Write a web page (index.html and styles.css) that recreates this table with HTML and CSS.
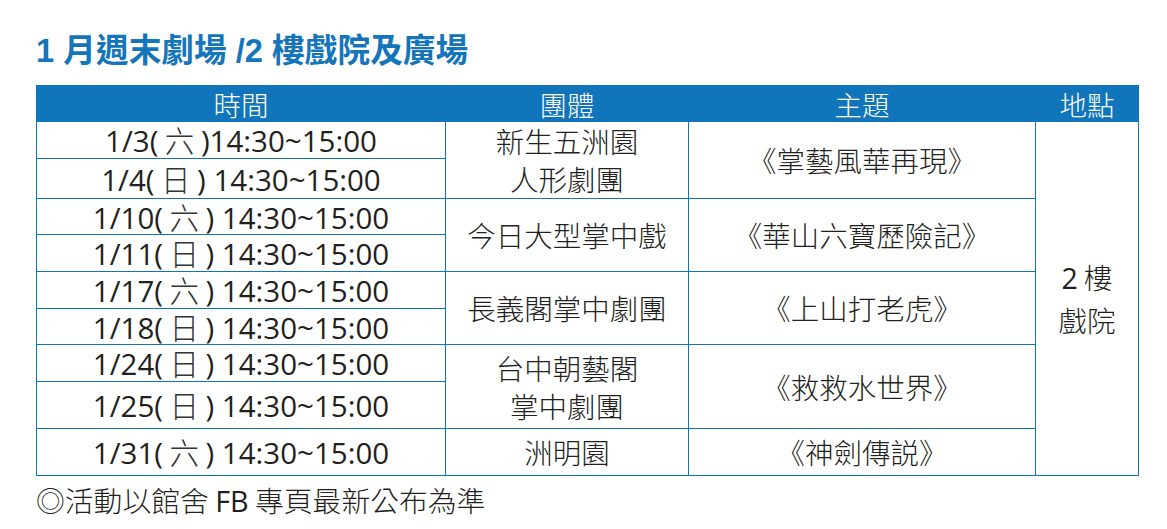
FILE: index.html
```html
<!DOCTYPE html>
<html lang="zh-Hant">
<head>
<meta charset="utf-8">
<title>1 月週末劇場</title>
<link rel="stylesheet" href="styles.css">
</head>
<body>
<div class="page">
  <h1 class="title">1 月週末劇場 /2 樓戲院及廣場</h1>
  <table class="sched">
    <colgroup>
      <col class="c-time">
      <col class="c-group">
      <col class="c-theme">
      <col class="c-place">
    </colgroup>
    <thead>
      <tr class="head">
        <th>時間</th>
        <th>團體</th>
        <th>主題</th>
        <th>地點</th>
      </tr>
    </thead>
    <tbody>
      <tr class="r1">
        <td class="time">1/3(<span class="cj"> 六 </span>)14:30~15:00</td>
        <td class="cjk two" rowspan="2">新生五洲園<br>人形劇團</td>
        <td class="cjk theme" rowspan="2">《掌藝風華再現》</td>
        <td class="cjk place" rowspan="9"><span class="lat">2</span> 樓<br>戲院</td>
      </tr>
      <tr class="r2">
        <td class="time">1/4(<span class="cj"> 日 </span>) 14:30~15:00</td>
      </tr>
      <tr class="r3">
        <td class="time">1/10(<span class="cj"> 六 </span>) 14:30~15:00</td>
        <td class="cjk" rowspan="2">今日大型掌中戲</td>
        <td class="cjk theme" rowspan="2">《華山六寶歷險記》</td>
      </tr>
      <tr class="r4">
        <td class="time">1/11(<span class="cj"> 日 </span>) 14:30~15:00</td>
      </tr>
      <tr class="r5">
        <td class="time">1/17(<span class="cj"> 六 </span>) 14:30~15:00</td>
        <td class="cjk" rowspan="2">長義閣掌中劇團</td>
        <td class="cjk theme" rowspan="2">《上山打老虎》</td>
      </tr>
      <tr class="r6">
        <td class="time">1/18(<span class="cj"> 日 </span>) 14:30~15:00</td>
      </tr>
      <tr class="r7">
        <td class="time">1/24(<span class="cj"> 日 </span>) 14:30~15:00</td>
        <td class="cjk two" rowspan="2">台中朝藝閣<br>掌中劇團</td>
        <td class="cjk theme" rowspan="2">《救救水世界》</td>
      </tr>
      <tr class="r8">
        <td class="time">1/25(<span class="cj"> 日 </span>) 14:30~15:00</td>
      </tr>
      <tr class="r9">
        <td class="time">1/31(<span class="cj"> 六 </span>) 14:30~15:00</td>
        <td class="cjk">洲明園</td>
        <td class="cjk theme">《神劍傳説》</td>
      </tr>
    </tbody>
  </table>
  <p class="note">◎活動以館舍 <span class="lat">FB</span> 專頁最新公布為準</p>
</div>
</body>
</html>
```

FILE: styles.css
```css
html, body {
  margin: 0;
  padding: 0;
  background: #ffffff;
}

.page {
  padding: 30px 0 0 36px;
  color: #231f20;
}

.title {
  margin: 0 0 14px 0;
  font-family: "Liberation Sans", "Noto Sans CJK TC", sans-serif;
  font-weight: 700;
  font-size: 32.7px;
  line-height: 41px;
  color: #1475bb;
  letter-spacing: 0;
}

.sched {
  border-collapse: collapse;
  table-layout: fixed;
  width: 1102px;
}

.c-time { width: 409px; }
.c-group { width: 243px; }
.c-theme { width: 347px; }
.c-place { width: 103px; }

.sched th,
.sched td {
  padding: 0;
  text-align: center;
  vertical-align: middle;
}

.head th {
  height: 35px;
  background: #1175bb;
  color: #ffffff;
  font-family: "Noto Sans CJK TC", sans-serif;
  font-weight: 300;
  font-size: 27.5px;
  line-height: 30px;
  border: 1px solid #1175bb;
  border-left: 1px solid #ffffff;
}

.head th:first-child {
  border-left: 1px solid #1175bb;
}

.sched td {
  border: 1px solid #1175bb;
}

.time {
  font-family: "Open Sans", "Noto Sans CJK TC", sans-serif;
  font-size: 29.5px;
  line-height: 30px;
  color: #231f20;
  white-space: nowrap;
}

.cj {
  font-family: "Noto Sans CJK TC", sans-serif;
  font-weight: 300;
  color: #333333;
}

.cjk {
  font-family: "Noto Sans CJK TC", sans-serif;
  font-weight: 300;
  font-size: 28.5px;
  line-height: 34px;
  color: #231f20;
}

.two {
  line-height: 38px;
}

.theme {
  letter-spacing: 0;
}

.lat {
  font-family: "Open Sans", sans-serif;
  font-weight: 400;
}

.place {
  line-height: 42px;
}

.r1 { height: 37px; }
.r2 { height: 39px; }
.r3 { height: 36px; }
.r4 { height: 37px; }
.r5 { height: 37px; }
.r6 { height: 36px; }
.r7 { height: 37px; }
.r8 { height: 47px; }
.r9 { height: 47px; }

.note {
  margin: 8px 0 0 0;
  font-family: "Noto Sans CJK TC", sans-serif;
  font-weight: 300;
  font-size: 28.8px;
  line-height: 32px;
  color: #231f20;
}
```
